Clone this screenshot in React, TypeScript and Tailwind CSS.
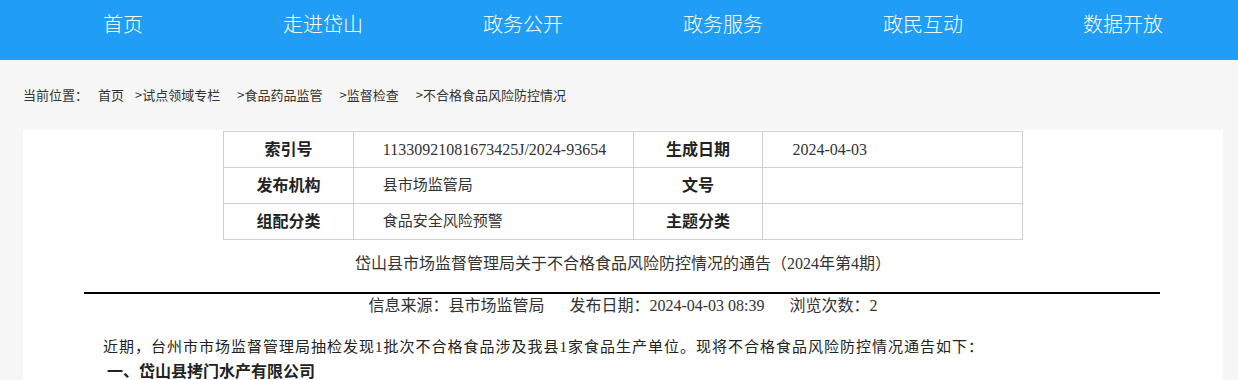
const navItems = ["首页", "走进岱山", "政务公开", "政务服务", "政民互动", "数据开放"];

const crumbs = [">试点领域专栏", ">食品药品监管", ">监督检查", ">不合格食品风险防控情况"];

const cjk = "font-['Noto_Sans_CJK_SC',sans-serif]";
const mixed = "font-['Liberation_Serif','Noto_Sans_CJK_SC',serif]";

function Label({ children }: { children: React.ReactNode }) {
  return (
    <td className={`border border-[#cfcfcf] w-[130px] h-9 pb-[3px] text-center text-[16px] font-bold text-[#222] ${cjk}`}>{children}</td>
  );
}

function Value({ children, w, small }: { children?: React.ReactNode; w: string; small?: boolean }) {
  return (
    <td className={`border border-[#cfcfcf] ${w} h-9 pl-[29px] ${small ? "text-[15px]" : "text-[16px]"} text-[#333] ${mixed}`}>
      {children}
    </td>
  );
}

export default function App() {
  return (
    <div className={`min-h-[380px] bg-[#f6f6f6] ${cjk}`}>
      <div className="h-[60px] bg-[#209df6]">
        <div className="ml-[23px] w-[1200px] grid grid-cols-6">
          {navItems.map((n) => (
            <div key={n} className="h-[48px] flex items-center justify-center text-white text-[20px] font-light">
              {n}
            </div>
          ))}
        </div>
      </div>

      <div className="ml-[23px] h-[70px] flex items-center text-[13px] text-[#333]">
        <span className="mr-[10px]">当前位置：</span>
        <span className="mr-[11px]">首页</span>
        {crumbs.map((c) => (
          <span key={c} className="mr-[17px]">{c}</span>
        ))}
      </div>

      <div className="ml-[23px] w-[1200px] bg-white pt-px h-[250px]">
        <table className="ml-[200px] w-[800px] border-collapse">
          <tbody>
            <tr>
              <Label>索引号</Label>
              <Value w="w-[280px]">11330921081673425J/2024-93654</Value>
              <Label>生成日期</Label>
              <Value w="w-[260px]">2024-04-03</Value>
            </tr>
            <tr>
              <Label>发布机构</Label>
              <Value w="w-[280px]" small>县市场监管局</Value>
              <Label>文号</Label>
              <Value w="w-[260px]" />
            </tr>
            <tr>
              <Label>组配分类</Label>
              <Value w="w-[280px]" small>食品安全风险预警</Value>
              <Label>主题分类</Label>
              <Value w="w-[260px]" />
            </tr>
          </tbody>
        </table>

        <div className={`mt-[12px] text-center text-[16px] text-[#333] ${mixed}`}>
          岱山县市场监督管理局关于不合格食品风险防控情况的通告（2024年第4期）
        </div>

        <div className="mt-[16px] ml-[61px] w-[1076px] h-[2px] bg-black" />

        <div className={`flex justify-center gap-[25px] text-[16px] text-[#333] ${mixed}`}>
          <span>信息来源：县市场监管局</span>
          <span>发布日期：2024-04-03 08:39</span>
          <span>浏览次数：2</span>
        </div>

        <p className={`mt-[19px] ml-[80px] text-[15px] leading-[20px] tracking-[1px] text-[#222] ${mixed}`}>
          近期，台州市市场监督管理局抽检发现1批次不合格食品涉及我县1家食品生产单位。现将不合格食品风险防控情况通告如下：
        </p>
        <p className="mt-[3px] ml-[84px] text-[16px] leading-[20px] font-bold text-[#222]">一、岱山县拷门水产有限公司</p>
      </div>
    </div>
  );
}
